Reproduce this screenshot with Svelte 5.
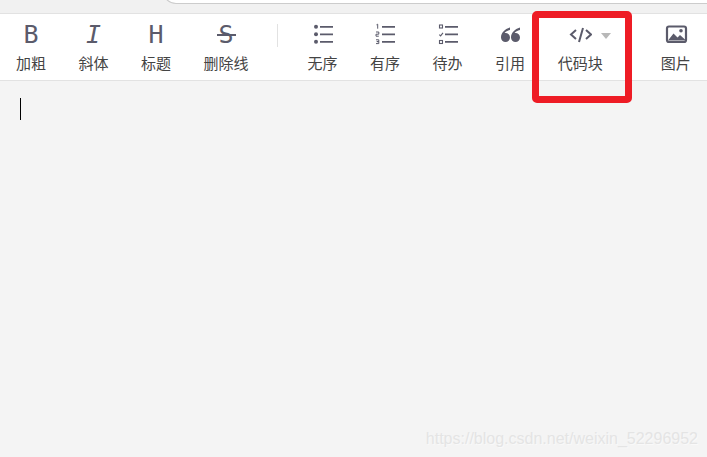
<script lang="ts">
  const watermark = 'https://blog.csdn.net/weixin_52296952';
</script>

<div class="page">
  <div class="top">
    <div class="search"></div>
  </div>

  <div class="toolbar">
    <div class="item">
      <span class="glyph">B</span>
      <span class="label">加粗</span>
    </div>
    <div class="item">
      <span class="glyph italic">I</span>
      <span class="label">斜体</span>
    </div>
    <div class="item">
      <span class="glyph">H</span>
      <span class="label">标题</span>
    </div>
    <div class="item">
      <span class="glyph strike">S</span>
      <span class="label">删除线</span>
    </div>

    <div class="divider"></div>

    <div class="item">
      <svg class="icon" width="24" height="24" viewBox="0 0 24 24">
        <circle cx="5" cy="4.800" r="2" fill="#5b5b6b" />
        <circle cx="5" cy="12.300" r="2" fill="#5b5b6b" />
        <circle cx="5" cy="19.800" r="2" fill="#5b5b6b" />
        <path d="M9 4.800h13M9 12.300h13M9 19.800h13" stroke="#5b5b6b" stroke-width="1.800" fill="none" />
      </svg>
      <span class="label">无序</span>
    </div>
    <div class="item">
      <svg class="icon" width="24" height="24" viewBox="0 0 24 24">
        <path d="M3.500 2.800l1.200-.6v4.500M3 10h2.800v2.200h-2.800v2h2.800M3 17.800h2.800v1.800h-2 2v2h-2.800" stroke="#5b5b6b" stroke-width="1" fill="none" />
        <path d="M9 4.800h13M9 12.300h13M9 19.800h13" stroke="#5b5b6b" stroke-width="1.800" fill="none" />
      </svg>
      <span class="label">有序</span>
    </div>
    <div class="item">
      <svg class="icon" width="24" height="24" viewBox="0 0 24 24">
        <rect x="3.500" y="3" width="3" height="3" stroke="#5b5b6b" stroke-width="1.100" fill="none" />
        <path d="M3.300 12.600l1.300 1.300 2.400-3" stroke="#5b5b6b" stroke-width="1.100" fill="none" />
        <rect x="3.500" y="18.500" width="3" height="3" stroke="#5b5b6b" stroke-width="1.100" fill="none" />
        <path d="M9 4.800h13M9 12.300h13M9 19.800h13" stroke="#5b5b6b" stroke-width="1.800" fill="none" />
      </svg>
      <span class="label">待办</span>
    </div>
    <div class="item">
      <svg class="icon" width="24" height="24" viewBox="0 0 24 24">
        <path d="M12 5.500C6.500 7 3 11 3 15.500a4.500 4.500 0 1 0 4.500-4.500c-.3 0-.6 0-.9.100C7.500 9.500 9.500 8.500 12 8zM22 5.500c-5.500 1.500-9 5.500-9 10a4.500 4.500 0 1 0 4.500-4.500c-.3 0-.6 0-.9.100C17.500 9.500 19.500 8.500 22 8z" fill="#5b5b6b" />
      </svg>
      <span class="label">引用</span>
    </div>
    <div class="item code">
      <svg class="icon" width="24" height="24" viewBox="0 0 24 24">
        <path d="M8 8L3 12.500l5 4.500M18 8l5 4.500-5 4.500M15 6l-4 14" stroke="#5b5b6b" stroke-width="2" fill="none" />
      </svg>
      <span class="caret"></span>
      <span class="label">代码块</span>
    </div>
    <div class="item">
      <svg class="icon" width="24" height="24" viewBox="0 0 24 24">
        <rect x="3" y="4.500" width="19" height="15.500" rx="2" stroke="#5b5b6b" stroke-width="2.200" fill="none" />
        <path d="M4 18.500l5.500-7 4 4 2.500-2.500 5 4.500v1z" fill="#5b5b6b" />
        <circle cx="17" cy="8.800" r="1.800" fill="#5b5b6b" />
      </svg>
      <span class="label">图片</span>
    </div>
  </div>

  <div class="editor">
    <div class="cursor"></div>
    <div class="watermark">{watermark}</div>
  </div>

  <div class="highlight"></div>
</div>

<style>
  :global(body) {
    margin: 0;
  }

  .page {
    position: relative;
    width: 707px;
    height: 457px;
    overflow: hidden;
    display: flex;
    flex-direction: column;
    background: #f4f4f4;
    font-family: "Liberation Sans", "Noto Sans CJK SC", sans-serif;
  }

  .top {
    height: 13px;
    flex-shrink: 0;
    overflow: hidden;
    background: #f1f1f1;
  }

  .search {
    height: 12px;
    margin-top: -9px;
    margin-left: 163px;
    background: #fff;
    border-left: 1px solid #ccc;
    border-bottom: 1px solid #ccc;
    border-bottom-left-radius: 14px;
  }

  .toolbar {
    height: 66px;
    flex-shrink: 0;
    display: flex;
    gap: 32.5px;
    padding-left: 16px;
    background: #fff;
    border-top: 1px solid #e2e2e2;
    border-bottom: 1px solid #e2e2e2;
  }

  .item {
    position: relative;
    display: flex;
    flex-direction: column;
    align-items: center;
  }

  .glyph {
    height: 23px;
    margin-top: 9px;
    font-family: "DejaVu Sans Mono", monospace;
    font-size: 25px;
    line-height: 24px;
    color: #5b5b6b;
  }

  .italic {
    font-style: italic;
  }

  .strike {
    position: relative;
  }

  .strike::after {
    content: '';
    position: absolute;
    left: -2px;
    right: -2px;
    top: 11px;
    height: 2px;
    background: #5b5b6b;
  }

  .icon {
    margin-top: 8px;
    display: block;
  }

  .label {
    margin-top: 8px;
    font-size: 15px;
    line-height: 20px;
    color: #444;
    white-space: nowrap;
  }

  .divider {
    width: 1px;
    height: 23px;
    margin: 10px -3px 0 -4px;
    background: #e2e2e2;
  }

  .code {
    margin-right: 25.500px;
  }

  .caret {
    position: absolute;
    left: 43px;
    top: 19px;
    border-left: 5px solid transparent;
    border-right: 5px solid transparent;
    border-top: 6px solid #b8b8b8;
  }

  .editor {
    position: relative;
    flex: 1;
  }

  .cursor {
    width: 1px;
    height: 22px;
    margin: 17px 0 0 20px;
    background: #000;
  }

  .watermark {
    position: absolute;
    right: 9px;
    bottom: 9px;
    font-size: 16px;
    line-height: 18px;
    color: #e4e4e4;
    text-shadow: 1px 1px 0 #f9f9f9;
  }

  .highlight {
    position: absolute;
    left: 532px;
    top: 11px;
    width: 100px;
    height: 92px;
    box-sizing: border-box;
    border: 7px solid #ee1c25;
    border-radius: 5px;
  }
</style>
